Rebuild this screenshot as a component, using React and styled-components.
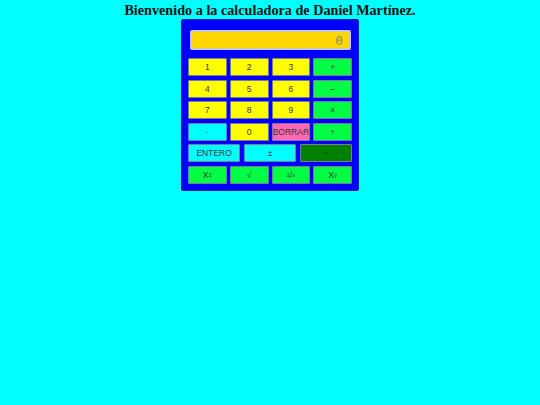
import React from "react"
import styled, { createGlobalStyle } from "styled-components"

const GlobalStyle = createGlobalStyle`
  html, body {
    margin: 0;
    padding: 0;
    background-color: #00ffff;
  }
`

const Page = styled.div`
  display: flex;
  flex-direction: column;
  align-items: center;
  padding-top: 2px;
`

const Title = styled.h1`
  margin: 0 0 1px 0;
  font-family: "Liberation Serif", serif;
  font-weight: bold;
  font-size: 14.2px;
  line-height: 16px;
  color: #111;
`

const Calculator = styled.div`
  box-sizing: border-box;
  width: 178px;
  background-color: #0000ff;
  border: 1px solid #00208a;
  border-radius: 2px;
  padding: 10px 6px 6px 6px;
  display: flex;
  flex-direction: column;
  gap: 3.5px;
`

const Display = styled.div`
  box-sizing: border-box;
  height: 20px;
  margin: 0 1px 4.5px 2px;
  background-color: #ffd700;
  border: 2px solid #c8c8d8;
  border-radius: 2px;
  display: flex;
  align-items: center;
  justify-content: flex-end;
  padding-right: 6px;
  font-family: "DejaVu Sans Mono", monospace;
  font-size: 13px;
  color: #8a8a70;
`

const Row = styled.div`
  display: grid;
  grid-template-columns: repeat(${(p) => p.cols}, minmax(0, 1fr));
  gap: ${(p) => (p.cols === 3 ? 3.5 : 3)}px;
`

const colors = {
  num: "#ffff00",
  op: "#00ff44",
  cyan: "#00ffff",
  pink: "#ff69b4",
  eq: "#008000",
}

const Key = styled.button`
  box-sizing: border-box;
  height: 18px;
  min-width: 0;
  padding: 0;
  margin: 0;
  border: 1px solid #7a7a9a;
  border-radius: 1px;
  background-color: ${(p) => colors[p.kind]};
  font-family: "Liberation Sans", Arial, sans-serif;
  font-size: 8.5px;
  color: ${(p) => (p.kind === "eq" ? "#003a00" : "#333")};
  display: flex;
  align-items: center;
  justify-content: center;
  cursor: pointer;

  sup, sub {
    font-size: 6px;
    line-height: 0;
  }
`

const App = () => {
  return (
    <>
      <GlobalStyle />
      <Page>
        <Title>Bienvenido a la calculadora de Daniel Martínez.</Title>
        <Calculator>
          <Display>0</Display>
          <Row cols={4}>
            <Key kind="num">1</Key>
            <Key kind="num">2</Key>
            <Key kind="num">3</Key>
            <Key kind="op">+</Key>
          </Row>
          <Row cols={4}>
            <Key kind="num">4</Key>
            <Key kind="num">5</Key>
            <Key kind="num">6</Key>
            <Key kind="op">−</Key>
          </Row>
          <Row cols={4}>
            <Key kind="num">7</Key>
            <Key kind="num">8</Key>
            <Key kind="num">9</Key>
            <Key kind="op">×</Key>
          </Row>
          <Row cols={4}>
            <Key kind="cyan">·</Key>
            <Key kind="num">0</Key>
            <Key kind="pink">BORRAR</Key>
            <Key kind="op">÷</Key>
          </Row>
          <Row cols={3}>
            <Key kind="cyan">ENTERO</Key>
            <Key kind="cyan">±</Key>
            <Key kind="eq">=</Key>
          </Row>
          <Row cols={4}>
            <Key kind="op">X<sup>2</sup></Key>
            <Key kind="op">√</Key>
            <Key kind="op"><sup>1</sup>/<sub>x</sub></Key>
            <Key kind="op">X<sup>y</sup></Key>
          </Row>
        </Calculator>
      </Page>
    </>
  )
}

export default App
